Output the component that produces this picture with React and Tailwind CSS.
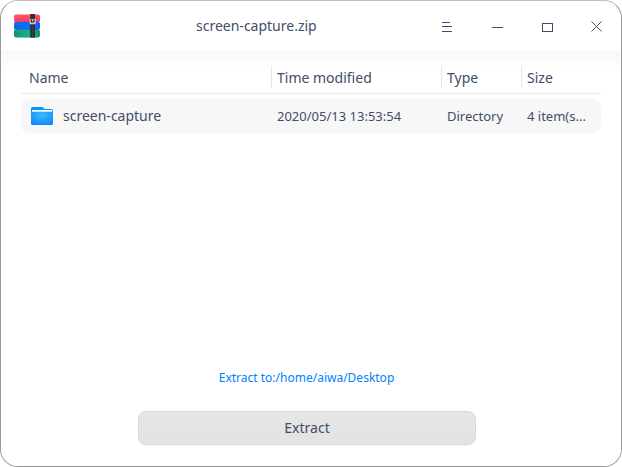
const files = [
  { name: "screen-capture", modified: "2020/05/13 13:53:54", type: "Directory", size: "4 item(s..." },
];

function ArchiveIcon() {
  return (
    <svg width="28" height="26" viewBox="0 0 28 26" className="shrink-0">
      <defs>
        <linearGradient id="red" x2=".3" y2="1"><stop stopColor="#ff5a4e" /><stop offset=".55" stopColor="#ff4a6c" /><stop offset="1" stopColor="#f53a6c" /></linearGradient>
        <linearGradient id="blue"><stop stopColor="#1268ee" /><stop offset=".5" stopColor="#0a70ff" /><stop offset="1" stopColor="#1260f0" /></linearGradient>
        <linearGradient id="green"><stop stopColor="#109a72" /><stop offset=".5" stopColor="#18ae84" /><stop offset="1" stopColor="#0c9a6e" /></linearGradient>
      </defs>
      <rect x="1" y="1.4" width="26" height="8" rx="1.800" fill="url(#red)" />
      <rect x="1" y="8.9" width="26" height="8" rx="1.800" fill="url(#blue)" />
      <rect x="1" y="16.4" width="26" height="8" rx="1.800" fill="url(#green)" />
      <path d="M2 8.700h24M2 16.200h24M2 23.900h24" stroke="#182060" strokeOpacity=".12" strokeWidth=".7" />
      <path d="M4 5h3v2H4zM8 6h2v1H8zM4 12h3v2H4zM8 14h2v1H8zM4 19h3v2H4zM8 21h2v1H8z" fill="#10204c" fillOpacity=".13" />
      <rect x="17.2" y="1" width="4.8" height="23.600" fill="#303038" />
      <path d="M19.6 12v11" stroke="#4d4b52" strokeDasharray="1 1" />
      <rect x="16.6" y="6" width="6.200" height="5.200" rx=".7" fill="#c9c5c4" />
      <path d="M18.4 6.500v2.500h2.400V6.500" fill="none" stroke="#242831" strokeWidth="1.2" />
    </svg>
  );
}

function FolderIcon() {
  return (
    <svg width="24" height="20" viewBox="0 0 24 20" className="shrink-0">
      <defs>
        <radialGradient id="folder" cx=".5" cy=".3" r=".75"><stop stopColor="#36bdff" /><stop offset="1" stopColor="#0d86fb" /></radialGradient>
      </defs>
      <path d="M1 2.500Q1 1 2.500 1H12.500L14.500 3H21.500Q23 3 23 4.500V10H1z" fill="#0798f4" />
      <rect x="2" y="4" width="20.200" height="3" rx=".5" fill="#f1faff" />
      <path d="M1 5Q1.300 5.700 2 5.700H22Q22.700 5.700 23 5V17.500Q23 19 21.500 19H2.500Q1 19 1 17.500z" fill="url(#folder)" />
    </svg>
  );
}

function WindowControls() {
  return (
    <svg width="162" height="14" viewBox="0 0 162 14" fill="none" stroke="#414d68" shapeRendering="crispEdges" className="shrink-0">
      <path d="M2 3.500h8M2 7.500h10M2 12.500h10" />
      <path d="M52 8.500h11" />
      <rect x="102.500" y="4.500" width="10" height="8" />
      <path d="M151.500 2.500l10 10M161.500 2.500l-10 10" shapeRendering="auto" />
    </svg>
  );
}

export default function App() {
  return (
    <div className="h-[467px] w-[622px] bg-white font-['Noto_Sans',sans-serif] text-[#414d68]">
      <div className="flex h-full flex-col overflow-hidden rounded-[18px] border border-[#999] border-t-[#bfbfbf] bg-white">
        <header className="flex h-[50px] shrink-0 items-center pl-3 pr-[19px]">
          <ArchiveIcon />
          <h1 className="ml-[155px] flex-1 text-sm leading-5">screen-capture.zip</h1>
          <WindowControls />
        </header>
        <main className="flex min-h-0 flex-1 flex-col bg-[linear-gradient(#f8f8f8,#fff_20px)] px-5">
          <div className="mt-[11px] grid h-8 shrink-0 grid-cols-[250px_170px_80px_80px] border-b border-[#ebebeb] pt-1 text-sm">
            <span className="h-[22px] pl-2 leading-6">Name</span>
            <span className="h-[22px] border-l border-[#e8e8e8] pl-[5px] leading-6">Time modified</span>
            <span className="h-[22px] border-l border-[#e8e8e8] pl-[5px] leading-6">Type</span>
            <span className="h-[22px] border-l border-[#e8e8e8] pl-[5px] leading-6">Size</span>
          </div>
          {files.map((file) => (
            <div key={file.name} className="mt-[5px] grid h-[34px] shrink-0 grid-cols-[250px_170px_80px_80px] items-center rounded-lg bg-[#f7f7f7] text-[13px]">
              <span className="flex items-center gap-[9px] pl-[9px] text-sm"><FolderIcon />{file.name}</span>
              <span className="pt-0.5 pl-1.5">{file.modified}</span>
              <span className="pt-0.5 pl-1.5">{file.type}</span>
              <span className="pt-0.5 pl-1.5">{file.size}</span>
            </div>
          ))}
          <button className="mt-auto mr-[9px] self-center text-xs leading-4 text-[#0082fa]">Extract to:/home/aiwa/Desktop</button>
          <button className="mt-[25px] mb-[21px] mr-2 h-[34px] w-[338px] shrink-0 self-center rounded-lg border border-[#d8d8d8] bg-linear-to-b from-[#e6e6e6] to-[#e3e3e3] text-sm shadow-[0_1px_1px_rgba(0,0,0,0.04)]">Extract</button>
        </main>
      </div>
    </div>
  );
}
